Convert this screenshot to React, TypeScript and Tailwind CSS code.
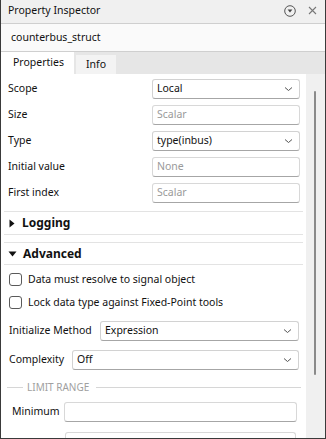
import React from "react";

const F = { fontFamily: '"Noto Sans", "Open Sans", sans-serif' };

function Chevron() {
  return (
    <svg width="9" height="6" viewBox="0 0 9 6" className="shrink-0">
      <path d="M1 1.5 L4.5 4.5 L8 1.5" fill="none" stroke="#555" strokeWidth="1" />
    </svg>
  );
}

function Select({ value, className = "" }: { value: string; className?: string }) {
  return (
    <div
      className={`h-[20px] flex items-center justify-between pl-[4px] pr-[6px] bg-white border border-[#d2d2d2] border-b-[#a6a6a6] rounded-[3px] text-[10.5px] text-[#111] ${className}`}
    >
      <span>{value}</span>
      <Chevron />
    </div>
  );
}

function Input({ placeholder = "", className = "" }: { placeholder?: string; className?: string }) {
  return (
    <div
      className={`h-[20px] flex items-center pl-[4px] bg-white border border-[#d8d8d8] border-b-[#a6a6a6] rounded-[3px] text-[10.5px] text-[#9a9a9a] ${className}`}
    >
      {placeholder}
    </div>
  );
}

function Row({ label, children }: { label: string; children: React.ReactNode }) {
  return (
    <div className="h-[26px] flex items-center">
      <div className="w-[151px] pl-[7px] text-[10.5px] text-[#111]">{label}</div>
      <div className="w-[148px]">{children}</div>
    </div>
  );
}

function Checkbox({ label }: { label: string }) {
  return (
    <div className="h-[23px] flex items-center pl-[8px]">
      <div className="w-[13px] h-[13px] shrink-0 rounded-[3px] border border-[#5a5a5a] bg-white" />
      <span className="ml-[6px] text-[10.5px] text-[#111] whitespace-nowrap">{label}</span>
    </div>
  );
}

export default function App() {
  return (
    <div
      style={F}
      className="w-[326px] h-[439px] overflow-hidden bg-white border-l border-r border-b border-[#3a3a3a] flex flex-col"
    >
      {/* Title bar */}
      <div className="h-[24px] shrink-0 flex items-center justify-between bg-[#f0f0f0] border-b border-[#cfcfcf] pl-[7px] pr-[8px]">
        <span className="text-[10.5px] text-[#111] -mt-[2px]">Property Inspector</span>
        <div className="flex items-center gap-[12px] -mt-[2px]">
          <svg width="12" height="12" viewBox="0 0 12 12">
            <circle cx="6" cy="6" r="5.3" fill="none" stroke="#555" strokeWidth="1" />
            <path d="M3.6 4.6 L8.4 4.6 L6 7.6 Z" fill="#444" />
          </svg>
          <svg width="9" height="9" viewBox="0 0 9 9">
            <path d="M1 1 L8 8 M8 1 L1 8" stroke="#777" strokeWidth="1.1" />
          </svg>
        </div>
      </div>
      {/* Name row */}
      <div className="h-[28px] shrink-0 flex items-center bg-[#fafafa] border-b border-[#cfcfcf] pl-[10px]">
        <span className="text-[10.5px] text-[#111]">counterbus_struct</span>
      </div>
      {/* Tabs */}
      <div className="h-[22px] shrink-0 flex items-end bg-[#e6e6e6]">
        <div className="w-[73px] h-[22px] bg-white flex items-center pl-[12px] text-[10.5px] text-[#111]">
          Properties
        </div>
        <div className="ml-[2px] w-[40px] h-[19px] bg-[#f3f3f3] flex items-center pl-[10px] text-[10.5px] text-[#111]">
          Info
        </div>
      </div>
      {/* Content */}
      <div className="flex-1 flex min-h-0">
        <div className="w-[305px] pt-[2px]">
          <Row label="Scope">
            <Select value="Local" />
          </Row>
          <Row label="Size">
            <Input placeholder="Scalar" />
          </Row>
          <Row label="Type">
            <Select value="type(inbus)" />
          </Row>
          <Row label="Initial value">
            <Input placeholder="None" />
          </Row>
          <Row label="First index">
            <Input placeholder="Scalar" />
          </Row>

          <div className="mt-[5px] mx-[3px] h-[24px] border-t border-b border-[#e3e3e3] flex items-center pl-[5px]">
            <svg width="6" height="9" viewBox="0 0 6 9">
              <path d="M0.5 0.5 L5.5 4.5 L0.5 8.5 Z" fill="#111" />
            </svg>
            <span className="ml-[7px] text-[12px] font-bold text-[#111]">Logging</span>
          </div>
          <div className="mt-[7px] mx-[3px] h-[23px] border-t border-b border-[#e3e3e3] flex items-center pl-[4px]">
            <svg width="9" height="6" viewBox="0 0 9 6">
              <path d="M0.5 0.5 L8.5 0.5 L4.5 5.5 Z" fill="#111" />
            </svg>
            <span className="ml-[6px] text-[12px] font-bold text-[#111]">Advanced</span>
          </div>

          <div className="mt-[3px]">
            <Checkbox label="Data must resolve to signal object" />
            <Checkbox label="Lock data type against Fixed-Point tools" />
          </div>

          <div className="mt-[7px] h-[19px] flex items-center">
            <span className="pl-[8px] w-[99px] shrink-0 text-[10.5px] text-[#111] whitespace-nowrap">Initialize Method</span>
            <Select value="Expression" className="w-[199px] h-[19px]" />
          </div>
          <div className="mt-[10px] h-[20px] flex items-center">
            <span className="pl-[8px] w-[71px] shrink-0 text-[10.5px] text-[#111] whitespace-nowrap">Complexity</span>
            <Select value="Off" className="w-[227px]" />
          </div>

          <div className="mt-[7px] h-[20px] flex items-center pl-[6px] pr-[5px]">
            <div className="w-[16px] h-px bg-[#d6d6d6]" />
            <span className="ml-[4px] text-[10px] text-[#a0a0a0]">LIMIT RANGE</span>
            <div className="ml-[7px] flex-1 h-px bg-[#d6d6d6]" />
          </div>

          <div className="mt-[5px] h-[20px] flex items-center">
            <span className="pl-[11px] w-[63px] shrink-0 text-[10.5px] text-[#111]">Minimum</span>
            <Input className="w-[233px]" />
          </div>
          <div className="mt-[10px] h-[20px] flex items-center">
            <span className="w-[64px] shrink-0" />
            <Input className="w-[231px]" />
          </div>
        </div>
        {/* Scrollbar */}
        <div className="w-[19px] bg-[#f0f0f0] flex justify-center">
          <div className="mt-[17px] w-[2px] h-[284px] bg-[#8a8a8a] rounded-full ml-[-2px]" />
        </div>
      </div>
    </div>
  );
}
